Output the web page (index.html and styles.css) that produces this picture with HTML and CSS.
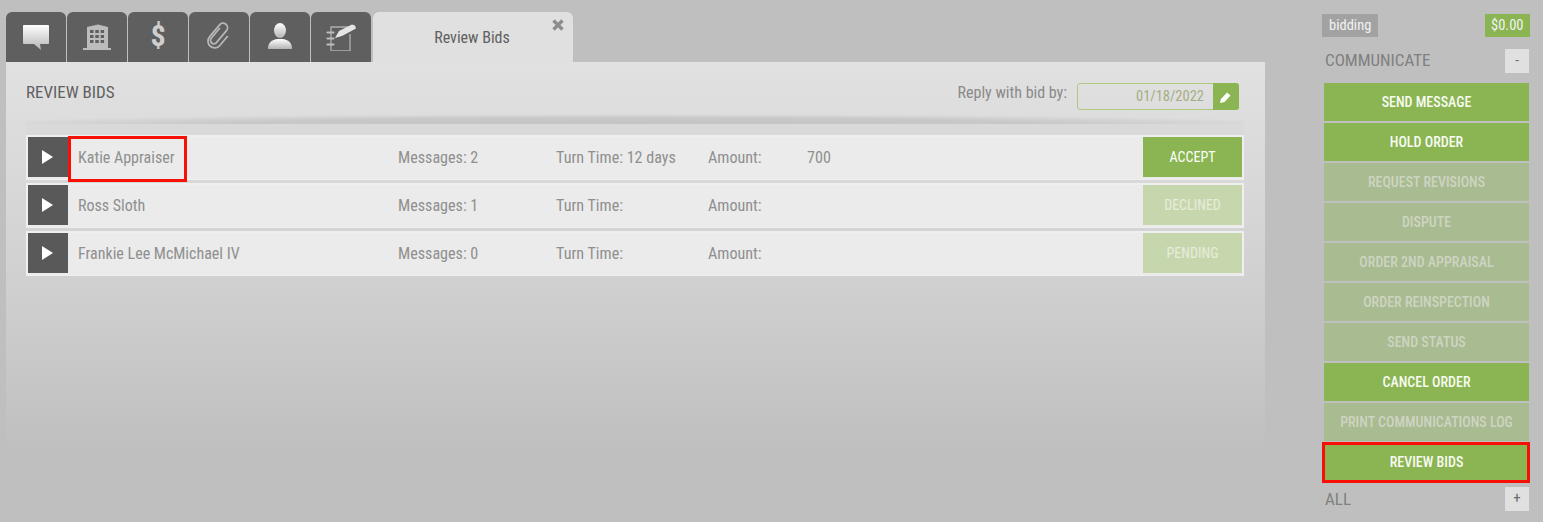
FILE: index.html
```html
<!DOCTYPE html>
<html lang="en">
<head>
<meta charset="utf-8">
<title>Review Bids</title>
<link rel="stylesheet" href="styles.css">
</head>
<body>
<main class="main">
  <nav class="tabs">
    <div class="tab">
      <svg class="ico" viewBox="0 0 30 30"><defs><linearGradient id="g" x1="0" y1="0" x2="0" y2="1"><stop offset="0" stop-color="#fff"/><stop offset="1" stop-color="#b4b4b4"/></linearGradient></defs><path d="M3 4h24a1 1 0 0 1 1 1v17a1 1 0 0 1-1 1h-8l1 6-7-6H3a1 1 0 0 1-1-1V5a1 1 0 0 1 1-1z" fill="url(#g)"/></svg>
    </div>
    <div class="tab">
      <svg class="ico" viewBox="0 0 30 30"><path fill="#bcbcbc" fill-rule="evenodd" d="M5 6l11-2.500L26 6v21h3v2H1v-2h4zM8 9v3h3.500V9zm5.300 0v3h3.500V9zm5.300 0v3h3.500V9zM8 14v3h3.500v-3zm5.300 0v3h3.500v-3zm5.300 0v3h3.500v-3zM8 19v3h3.500v-3zm5.300 0v3h3.500v-3zm5.300 0v3h3.500v-3z"/></svg>
    </div>
    <div class="tab">
      <span class="dollar">$</span>
    </div>
    <div class="tab">
      <svg class="ico" viewBox="0 0 30 30"><path d="M12 9V21a3 3 0 0 0 6 0V7a4 4 0 0 0-8 0V21a6 6 0 0 0 12 0V10" transform="rotate(40 15 15) translate(15 15) scale(1.120) translate(-16 -15)" fill="none" stroke="#b6b6b6" stroke-width="1.600"/></svg>
    </div>
    <div class="tab">
      <svg class="ico" viewBox="0 0 30 30"><ellipse cx="15" cy="9.500" rx="6" ry="7.500" fill="url(#g)"/><path d="M3 28c0-6 3-9 9-10h6c6 1 9 4 9 10z" fill="url(#g)"/></svg>
    </div>
    <div class="tab">
      <svg class="ico" viewBox="0 0 30 30"><path d="M24 13V30H5V6H23" fill="none" stroke="#b0b0b0" stroke-width="1.300"/><path d="M1.500 11.500h6M1.500 17.500h6M1.500 23.500h6" stroke="#bdbdbd" stroke-width="2.200" stroke-linecap="round"/><path d="M9 17l4-7 13-6.500 3 1 1 3-14 7.500z" fill="#e6e6e6"/></svg>
    </div>
    <div class="tab tab-active">
      <span>Review Bids</span>
      <svg class="close" viewBox="0 0 14 14"><path d="M2.500 2.500l9 9M11.500 2.500l-9 9" stroke="#8d8d8d" stroke-width="3.400"/></svg>
    </div>
  </nav>
  <section class="panel">
    <header class="panel-head">
      <h1 class="title">REVIEW BIDS</h1>
      <div class="reply">
        <span class="reply-label">Reply with bid by:</span>
        <div class="date">
          <span class="date-val">01/18/2022</span>
          <span class="date-btn"><svg class="pencil" viewBox="0 0 12 12"><path d="M0 12l1-4 6-6.500 3.500 3L4.500 11z" fill="#fff"/></svg></span>
        </div>
      </div>
    </header>
    <div class="divider"></div>
    <div class="rows">
      <div class="row">
        <span class="play"><i class="tri"></i></span>
        <span class="name highlighted">Katie Appraiser</span>
        <span class="msgs">Messages: 2</span>
        <span class="turn">Turn Time: 12 days</span>
        <span class="amt">Amount:</span>
        <span class="val">700</span>
        <span class="act">ACCEPT</span>
      </div>
      <div class="row">
        <span class="play"><i class="tri"></i></span>
        <span class="name">Ross Sloth</span>
        <span class="msgs">Messages: 1</span>
        <span class="turn">Turn Time:</span>
        <span class="amt">Amount:</span>
        <span class="val"></span>
        <span class="act off">DECLINED</span>
      </div>
      <div class="row">
        <span class="play"><i class="tri"></i></span>
        <span class="name">Frankie Lee McMichael IV</span>
        <span class="msgs">Messages: 0</span>
        <span class="turn">Turn Time:</span>
        <span class="amt">Amount:</span>
        <span class="val"></span>
        <span class="act off">PENDING</span>
      </div>
    </div>
  </section>
</main>
<aside class="side">
  <div class="status">
    <span class="chip">bidding</span>
    <span class="chip chip-green">$0.00</span>
  </div>
  <div class="sec">
    <span class="sec-label">COMMUNICATE</span>
    <span class="toggle">-</span>
  </div>
  <div class="btns">
    <div class="btn">SEND MESSAGE</div>
    <div class="btn">HOLD ORDER</div>
    <div class="btn dis">REQUEST REVISIONS</div>
    <div class="btn dis">DISPUTE</div>
    <div class="btn dis">ORDER 2ND APPRAISAL</div>
    <div class="btn dis">ORDER REINSPECTION</div>
    <div class="btn dis">SEND STATUS</div>
    <div class="btn">CANCEL ORDER</div>
    <div class="btn dis">PRINT COMMUNICATIONS LOG</div>
    <div class="btn highlighted-btn">REVIEW BIDS</div>
  </div>
  <div class="sec sec-all">
    <span>ALL</span>
    <span class="toggle">+</span>
  </div>
</aside>
</body>
</html>
```

FILE: styles.css
```css
*, *::after { box-sizing: border-box; }
html, body { height: 100%; }
body {
  margin: 0;
  height: 522px;
  overflow: hidden;
  background: #bfbfbf;
  display: flex;
  font-family: "Roboto", "Liberation Sans", sans-serif;
  font-stretch: 75%;
  font-size: 15px;
  color: #8f8f8f;
}
.main { width: 1265px; padding: 12px 0 0 6px; flex: none; }
.tabs { display: flex; gap: 1px; height: 50px; }
.tab {
  width: 60px;
  background: #5f5f5f;
  border-radius: 6px 6px 0 0;
  display: flex;
  align-items: center;
  justify-content: center;
  padding-bottom: 3px;
}
.ico { width: 30px; height: 30px; }
.dollar {
  font-weight: 700;
  font-size: 30px;
  line-height: 30px;
  color: #cfcfcf;
}
.tab-active {
  position: relative;
  width: 200px;
  margin-left: 1px;
  background: #e0e0e0;
  color: #606060;
  font-size: 16px;
  padding: 0 2px 0 0;
}
.close { position: absolute; top: 6px; right: 8px; width: 14px; height: 14px; }
.panel {
  height: 400px;
  background: linear-gradient(#e1e1e1 0, #d9d9d9 110px, #cfcfcf 230px, #bfbfbf 390px);
  padding: 0 21px 0 20px;
}
.panel-head {
  height: 52px;
  display: flex;
  align-items: flex-start;
  justify-content: space-between;
  padding: 21px 5px 0 0;
}
.title { margin: 0; font-size: 17px; font-weight: 400; color: #5f5f5f; line-height: 19px; }
.reply { display: flex; gap: 10px; }
.reply-label { font-size: 16px; line-height: 19px; color: #8a8a8a; }
.date {
  width: 162px;
  height: 27px;
  display: flex;
  border: 1px solid #aec97e;
  border-radius: 3px;
}
.date-val { flex: 1; text-align: right; padding-right: 9px; line-height: 25px; color: #a3af83; font-size: 14.500px; }
.date-btn {
  width: 26px;
  margin: -1px -1px -1px 0;
  background: #8ab552;
  border-radius: 0 3px 3px 0;
  display: flex;
  align-items: center;
  justify-content: center;
}
.pencil { width: 12px; height: 12px; }
.divider {
  height: 21px;
  background:
    radial-gradient(55% 100% at 50% 100%, #c4c4c4 0, #c8c8c8 60%, rgba(200, 200, 200, 0) 100%) top / 100% 10px no-repeat,
    linear-gradient(#d9d9d9, #d9d9d9) bottom / 100% 11px no-repeat;
}
.rows { display: flex; flex-direction: column; gap: 3px; }
.row {
  height: 45px;
  background: #ebebeb;
  border: 2px solid #efefef;
  border-bottom-width: 1px;
  display: grid;
  grid-template-columns: 40px 330px 158px 152px 99px 1fr 99px;
  align-items: center;
  position: relative;
  line-height: 18px;
}
.row:first-child { z-index: 1; }
.play {
  height: 40px;
  background: #595959;
  display: flex;
  align-items: center;
  justify-content: center;
  align-self: start;
  padding-right: 1px;
}
.tri { width: 0; height: 0; border-left: 11px solid #fff; border-top: 7.500px solid transparent; border-bottom: 7.500px solid transparent; }
.name { padding-left: 10px; font-size: 16px; position: relative; }
.msgs, .turn, .amt, .val { font-size: 16.100px; }
.act {
  height: 40px;
  align-self: start;
  background: #8ab552;
  color: #fff;
  font-size: 14px;
  display: flex;
  align-items: center;
  justify-content: center;
}
.off { background: #c6d7ad; color: #e6eddb; }
.highlighted::after {
  content: "";
  position: absolute;
  left: 0;
  top: -13px;
  width: 119px;
  height: 46px;
  border: 3px solid #f80f06;
}
.side { width: 205px; margin-left: 59px; flex: none; padding-top: 14px; }
.status { display: flex; justify-content: space-between; margin: 0 -1px 0 -2px; }
.chip { height: 23px; line-height: 23px; background: #a2a2a2; color: #f2f2f2; font-size: 14.500px; padding: 0 7px; }
.chip-green { background: #8ab552; padding: 0 6.500px; }
.sec { display: flex; justify-content: space-between; align-items: center; font-size: 17px; color: #808080; margin-top: 12px; height: 24px; padding-left: 1px; line-height: 22px; }
.sec-label { padding-bottom: 2px; }
.toggle { width: 24px; height: 24px; background: #e0e0e0; font-size: 15px; text-align: center; line-height: 22px; color: #6b6b6b; }
.btns { display: flex; flex-direction: column; gap: 2px; margin-top: 10px; }
.btn {
  height: 38px;
  background: #8ab552;
  color: #f8fbf2;
  font-size: 14px;
  font-weight: 500;
  display: flex;
  align-items: center;
  justify-content: center;
}
.dis { background: #a9bb90; color: #cdd5c2; }
.highlighted-btn { position: relative; }
.highlighted-btn::after {
  content: "";
  position: absolute;
  inset: -1px -1px -2px -2px;
  border: 3px solid #f80f06;
}
.sec-all { margin-top: 6px; }
```
